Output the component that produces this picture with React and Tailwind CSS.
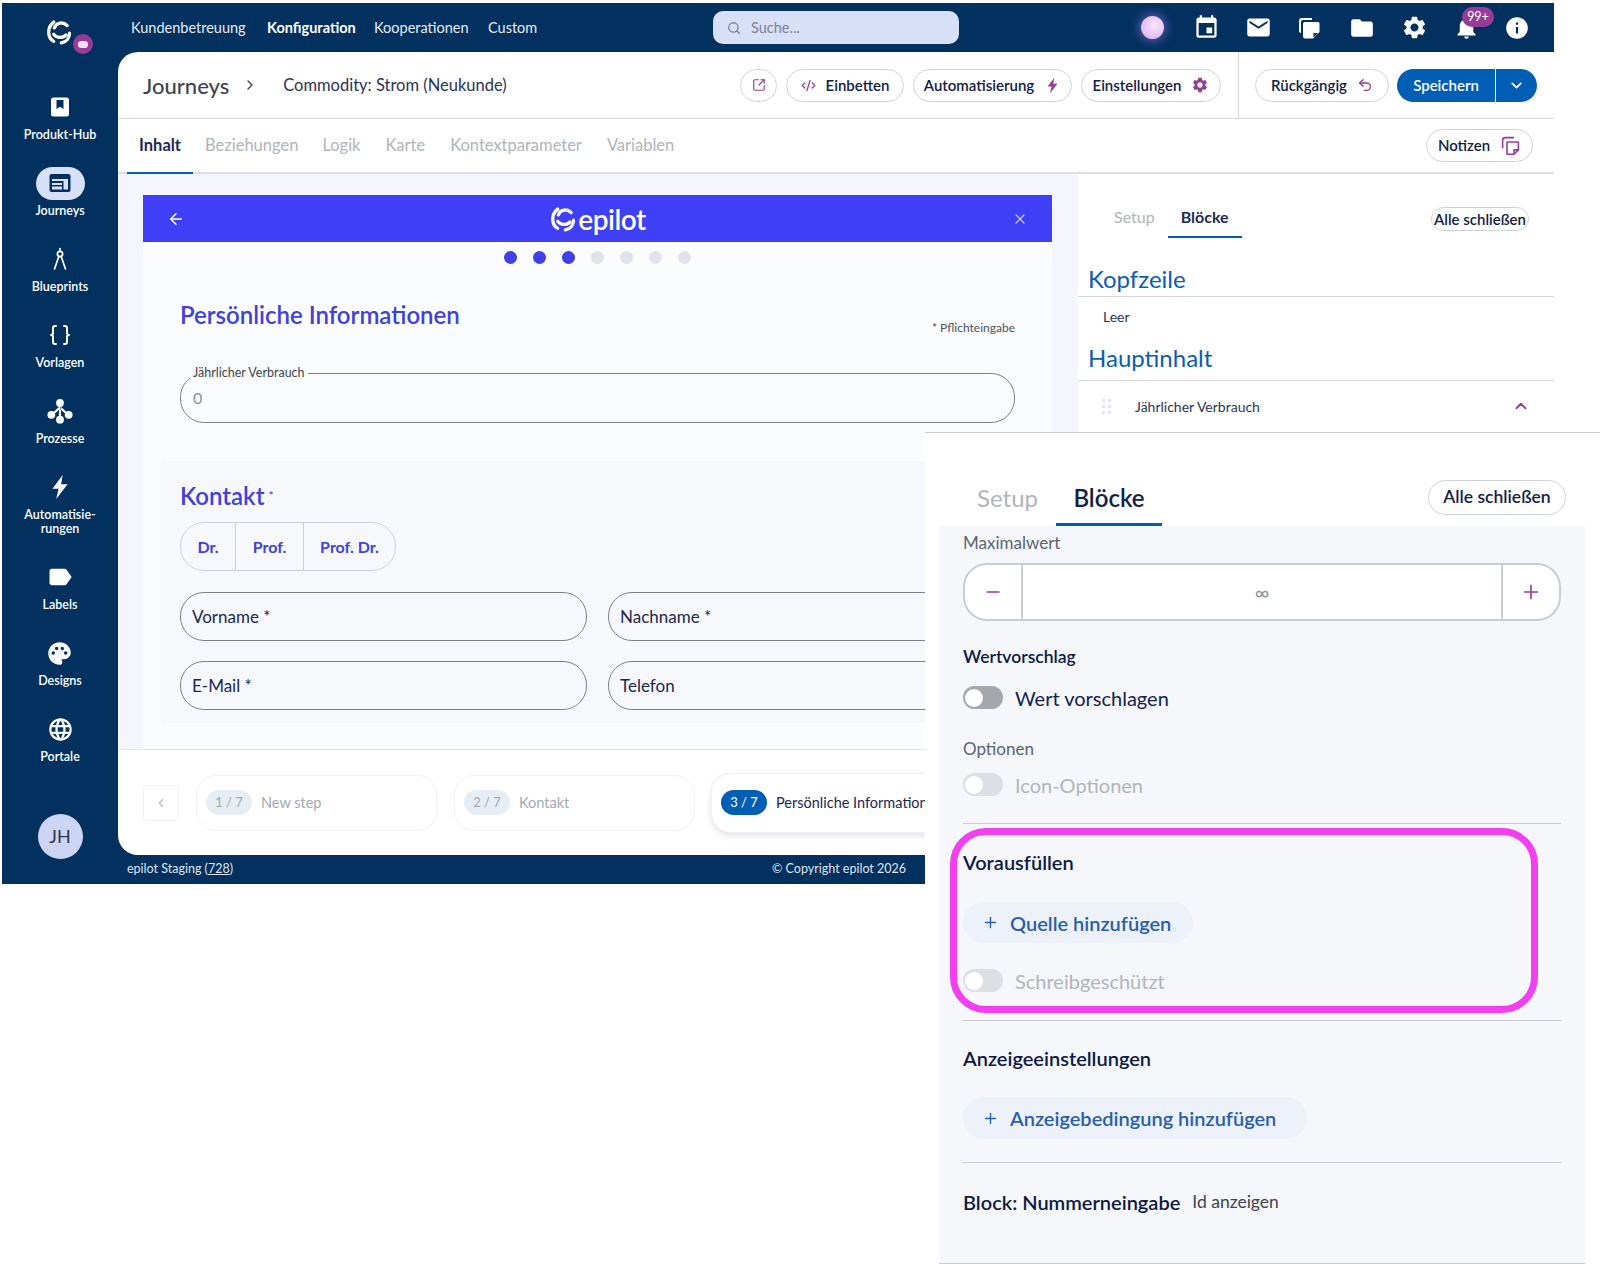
import { ArrowLeft, Braces, ChevronDown, ChevronLeft, ChevronRight, ChevronUp, Code2, Copy, Minus, Plus, Search, SquareArrowOutUpRight, Undo2, X } from 'lucide-react';
import { MdBolt, MdEmail, MdEvent, MdFolder, MdInfo, MdLabel, MdLanguage, MdNotifications, MdPalette, MdSettings } from 'react-icons/md';

// small drawings the icon packs don't have
const Swirl = ({ className }) => (
  <svg viewBox="0 0 24 24" fill="none" stroke="currentColor" strokeWidth="2.8" strokeLinecap="round" className={className}>
    <path d="M8 8.5C9.5 4 15.5 2.8 19 6.5" />
    <path d="M7.5 3.5C1.5 8 2 17 7.5 20" />
    <path d="M7.5 14C10 17.5 15.5 17.5 18 14.5" />
    <path d="M21 13C21 17 18.5 20.5 14 21.3" />
  </svg>
);

const HubIcon = () => (
  <svg viewBox="0 0 24 24" className="w-6 h-6">
    <rect x="3" y="2.5" width="18" height="19" rx="2.5" fill="white" />
    <path d="M8.5 5h7v9l-3.5-2.3L8.5 14z" fill="#03315f" />
  </svg>
);

const JourneyIcon = () => (
  <svg viewBox="0 0 24 24" className="w-[24px] h-[24px]">
    <rect x="1.5" y="3" width="21" height="18" rx="2" fill="#03315f" />
    <rect x="4" y="8" width="16" height="2" fill="#d7e0f7" />
    <rect x="4" y="12" width="10" height="2" fill="#d7e0f7" />
    <rect x="4" y="15.5" width="10" height="3" fill="#d7e0f7" />
    <rect x="15.5" y="10" width="4.5" height="8.5" fill="#d7e0f7" />
  </svg>
);

const CompassIcon = () => (
  <svg viewBox="0 0 24 24" fill="none" stroke="white" strokeWidth="1.7" strokeLinecap="round" className="w-6 h-6">
    <path d="M12 1.5v2.5" />
    <circle cx="12" cy="7" r="2.6" />
    <path d="M10.8 9.5 6.5 22M13.2 9.5 17.5 22" />
  </svg>
);

const ProcessIcon = () => (
  <svg viewBox="0 0 24 24" className="w-[26px] h-[26px]" fill="white">
    <circle cx="12" cy="4.5" r="3.6" />
    <circle cx="4" cy="15.5" r="3.6" />
    <circle cx="20" cy="15.5" r="3.6" />
    <circle cx="12" cy="20" r="3.6" />
    <path d="M11 6h2v12h-2zM11.2 8l1.4 1.4-7 6.6-1.4-1.4zM12.8 8l-1.4 1.4 7 6.6 1.4-1.4z" />
  </svg>
);

const BoltIcon = ({ className, color = 'white' }) => (
  <svg viewBox="0 0 24 24" className={className} fill={color}>
    <path d="M14.5 1 5 13.5h5.7L8.5 23 19 9.5h-6z" />
  </svg>
);

const NotesFilled = () => (
  <svg viewBox="0 0 24 24" className="w-6 h-6" fill="white">
    <path d="M5 2h10v2H6a2 2 0 0 0-2 2v11l-1.300-.5C2.500 16 2 15.500 2 15V5a3 3 0 0 1 3-3z" />
    <path d="M8 6h13a1.500 1.500 0 0 1 1.500 1.500V16l-6.500 6.500H8A2 2 0 0 1 6 20.500V8a2 2 0 0 1 2-2z" />
    <path d="M16.500 17H21l-4.500 4.500z" fill="#03315f" />
  </svg>
);

const NotesOutline = () => (
  <svg viewBox="0 0 24 24" fill="none" stroke="#963c96" strokeWidth="1.8" strokeLinejoin="round" className="w-[21px] h-[21px]">
    <path d="M16 3H6a3 3 0 0 0-3 3v9" />
    <path d="M8 8h13v9l-5 5H8z" />
    <path d="M16 22v-5h5" />
  </svg>
);

const sideItems = [
  { label: 'Produkt-Hub', icon: <HubIcon /> },
  { label: 'Journeys', icon: <div className="w-[49px] h-[33px] shrink-0 rounded-full bg-[#d7e0f7] flex items-center justify-center"><JourneyIcon /></div> },
  { label: 'Blueprints', icon: <CompassIcon /> },
  { label: 'Vorlagen', icon: <Braces size={24} color="white" strokeWidth={2} /> },
  { label: 'Prozesse', icon: <ProcessIcon /> },
  { label: 'Automatisie-', label2: 'rungen', icon: <BoltIcon className="w-[26px] h-[26px]" /> },
  { label: 'Labels', icon: <MdLabel size={28} color="white" /> },
  { label: 'Designs', icon: <MdPalette size={27} color="white" /> },
  { label: 'Portale', icon: <MdLanguage size={27} color="white" /> },
];

const Pill = ({ children, className = '' }) => (
  <button className={`h-[33px] rounded-full border border-[#cfd3da] bg-white flex items-center justify-center gap-[10px] text-[15px] font-semibold text-[#121c45] ${className}`}>
    {children}
  </button>
);

const Field = ({ children, className = '' }) => (
  <div className={`h-[49px] rounded-[24px] border border-[#7c818c] flex items-center pl-[11px] text-[17px] text-[#1d2750] ${className}`}>
    {children}
  </div>
);

const Switch = ({ disabled, label }) => (
  <div className="flex items-center gap-[12px] h-[23px]">
    <div className={`w-[40px] h-[23px] rounded-full flex items-center pl-[2px] ${disabled ? 'bg-[#dcdfe3]' : 'bg-[#a4a7ae]'}`}>
      <div className="w-[18px] h-[18px] rounded-full bg-white" />
    </div>
    <span className={`text-[20px] ${disabled ? 'text-[#b2b5ba]' : 'text-[#142050]'}`}>{label}</span>
  </div>
);

const AddButton = ({ label, className = '' }) => (
  <button className={`h-[41px] rounded-full bg-[#edf1fa] flex items-center pl-[19px] gap-[11px] text-[20px] font-semibold text-[#2a5fae] ${className}`}>
    <Plus size={17} strokeWidth={2} />
    {label}
  </button>
);

const Step = ({ n, label, active, className = '' }) => (
  <div className={`h-[56px] w-[241px] shrink-0 rounded-[20px] border border-[#eff1f4] bg-white flex items-center pl-[9px] gap-[9px] ${active ? 'shadow-[0_3px_6px_rgba(20,30,60,0.12)]' : ''} ${className}`}>
    <span className={`w-[46px] h-[25px] rounded-full flex items-center justify-center text-[13px] ${active ? 'bg-[#005eb4] text-white' : 'bg-[#e7edf5] text-[#a3a9b3]'}`}>{n}</span>
    <span className={`text-[14.500px] whitespace-nowrap ${active ? 'text-[#1d2750]' : 'text-[#a3a9b3]'}`}>{label}</span>
  </div>
);

const App = () => {
  return (
    <div className="relative w-[1600px] h-[1266px] overflow-hidden bg-white font-['Lato','Noto_Sans',sans-serif] pt-[3px] pl-[2px]">
      <div className="flex w-[1552px] h-[881px] bg-[#03315f]">
        {/* sidebar */}
        <aside className="w-[116px] shrink-0 flex flex-col items-center">
          <div className="relative h-[92px] w-full shrink-0">
            <Swirl className="absolute left-[43px] top-[15px] w-[28px] h-[28px] text-white" />
            <div className="absolute left-[71px] top-[31px] w-[20px] h-[20px] rounded-full bg-[#963c96] flex items-center justify-center">
              <div className="w-[10px] h-[7px] rounded-[3px] bg-[#f3dff3]" />
            </div>
          </div>
          {sideItems.map((item) => (
            <div key={item.label} className="flex flex-col items-center mb-[29px]">
              <div className="h-6 flex items-center justify-center">{item.icon}</div>
              <div className="mt-[9px] text-[12.500px] leading-[14px] font-semibold text-white text-center">
                {item.label}
                {item.label2 && <div>{item.label2}</div>}
              </div>
            </div>
          ))}
          <div className="mt-auto mb-[25px] w-[45px] h-[45px] rounded-full bg-[#cdd5f5] flex items-center justify-center text-[18px] text-[#2c3354]">JH</div>
        </aside>

        <div className="flex-1 min-w-0 flex flex-col">
          {/* top nav */}
          <header className="h-[49px] shrink-0 flex items-center text-[14.500px] text-[#e6ebf3]">
            <nav className="w-[595px] pl-[13px] flex items-center">
              <span className="w-[136px]">Kundenbetreuung</span>
              <span className="w-[107px] font-bold text-white">Konfiguration</span>
              <span className="w-[114px]">Kooperationen</span>
              <span>Custom</span>
            </nav>
            <div className="w-[246px] h-[33px] rounded-[10px] bg-[#d7e0f7] flex items-center pl-[14px] gap-[10px] text-[#7b8396]">
              <Search size={14} strokeWidth={2.200} />
              Suche...
            </div>
            <div className="ml-auto mr-[24px] flex items-center">
              <div className="w-[23px] h-[23px] rounded-full mr-[29px] bg-[radial-gradient(circle_at_60%_40%,#f8e6fb,#d7a6ee)] shadow-[0_0_9px_3px_rgba(130,110,220,0.55)]" />
              <MdEvent size={27} color="white" className="mr-[25px]" />
              <MdEmail size={27} color="white" className="mr-[25px]" />
              <span className="mr-[28px]"><NotesFilled /></span>
              <MdFolder size={26} color="white" className="mr-[26px]" />
              <MdSettings size={27} color="white" className="mr-[25px]" />
              <div className="relative mr-[24px]">
                <MdNotifications size={27} color="white" />
                <span className="absolute left-[9px] top-[-7px] w-[32px] h-[20px] rounded-full bg-[#963c96] text-white text-[12.500px] flex items-center justify-center">99+</span>
              </div>
              <MdInfo size={26} color="white" />
            </div>
          </header>

          {/* main panel */}
          <main className="h-[803px] shrink-0 bg-white rounded-l-[20px] flex flex-col overflow-hidden">
            <div className="h-[67px] shrink-0 border-b border-[#d3d6dc] flex items-center pl-[25px]">
              <span className="text-[22px] font-medium text-[#3d4450]">Journeys</span>
              <ChevronRight size={16} className="ml-[13px] text-[#3d4450]" />
              <span className="ml-[25px] text-[16.500px] text-[#2c3354]">Commodity: Strom (Neukunde)</span>
              <div className="ml-auto flex items-center h-full">
                <Pill className="w-[37px] mr-[9px]"><SquareArrowOutUpRight size={14} color="#963c96" strokeWidth={2} /></Pill>
                <Pill className="w-[118px] mr-[9px]"><Code2 size={15} color="#963c96" />Einbetten</Pill>
                <Pill className="w-[159px] mr-[9px]">Automatisierung<BoltIcon className="w-[17px] h-[17px]" color="#963c96" /></Pill>
                <Pill className="w-[140px] mr-[17px]">Einstellungen<MdSettings size={18} color="#963c96" /></Pill>
                <div className="h-full border-l border-[#d3d6dc] mr-[16px]" />
                <Pill className="w-[134px] mr-[8px]">Rückgängig<Undo2 size={16} color="#963c96" /></Pill>
                <div className="flex h-[33px] mr-[17px] text-white text-[15px] font-semibold">
                  <div className="w-[98px] rounded-l-full bg-[#005eb4] flex items-center justify-center">Speichern</div>
                  <div className="w-[41px] ml-px rounded-r-full bg-[#005eb4] flex items-center justify-center"><ChevronDown size={17} strokeWidth={2.500} /></div>
                </div>
              </div>
            </div>

            <div className="h-[55px] shrink-0 border-b-2 border-[#dddfe3] flex items-center pl-[9px] text-[16.500px] text-[#b1b4ba]">
              <div className="relative w-[66px] h-full flex items-center justify-center font-bold text-[#1e2a52]">
                Inhalt
                <div className="absolute left-0 right-0 bottom-[-2px] h-[2px] bg-[#005eb4]" />
              </div>
              <span className="ml-[12px]">Beziehungen</span>
              <span className="ml-[24px]">Logik</span>
              <span className="ml-[25px]">Karte</span>
              <span className="ml-[25px]">Kontextparameter</span>
              <span className="ml-[25px]">Variablen</span>
              <Pill className="ml-auto mr-[21px] w-[107px]">Notizen<NotesOutline /></Pill>
            </div>

            <div className="h-[575px] shrink-0 flex">
              {/* journey preview */}
              <section className="w-[960px] shrink-0 bg-[#f5f6fd] pt-[21px] pl-[25px] overflow-hidden">
                <div className="w-[909px] h-[47px] bg-[#3f40f5] flex items-center justify-center relative text-white">
                  <ArrowLeft size={18} strokeWidth={2} className="absolute left-[24px]" />
                  <div className="flex items-center gap-[1px]">
                    <Swirl className="w-[28px] h-[28px]" />
                    <span className="text-[28px] font-semibold leading-none tracking-[-0.5px]">epilot</span>
                  </div>
                  <X size={16} strokeWidth={1.800} className="absolute right-[24px] text-[#c9cbfb]" />
                </div>
                <div className="w-[909px] h-[507px] bg-[#fbfcfe]">
                  <div className="pt-[9px] flex justify-center gap-[16px]">
                    {[1, 1, 1, 0, 0, 0, 0].map((on, i) => (
                      <span key={i} className={`w-[13px] h-[13px] rounded-full ${on ? 'bg-[#3f40e6]' : 'bg-[#e1e3ea]'}`} />
                    ))}
                  </div>
                  <div className="mt-[36px] px-[37px]">
                    <div className="flex justify-between">
                      <h2 className="text-[24px] leading-[30px] font-semibold text-[#4041dc]">Persönliche Informationen</h2>
                      <span className="mt-[20px] text-[12px] leading-[16px] text-[#4b5160]">* Pflichteingabe</span>
                    </div>
                    <div className="relative mt-[37px] h-[50px] rounded-[24px] border border-[#7c818c] flex items-center pl-[12px] text-[16px] text-[#8a8f99]">
                      0
                      <span className="absolute left-[9px] top-[-8px] bg-[#fbfcfe] px-[3px] text-[12.500px] leading-[14px] text-[#3d4450]">Jährlicher Verbrauch</span>
                    </div>
                  </div>
                  <div className="mt-[38px] mx-[18px] pt-[20px] px-[19px] h-[262px] bg-[#f6f8fc]">
                    <div className="flex items-center">
                      <h2 className="text-[24px] leading-[30px] font-semibold text-[#4041dc]">Kontakt</h2>
                      <span className="ml-[4px] text-[12px] text-[#4041dc]">*</span>
                    </div>
                    <div className="mt-[11px] w-[216px] h-[49px] rounded-[24px] border border-[#cdd1da] flex text-[16px] font-bold text-[#4041dc]">
                      <span className="w-[55px] flex items-center justify-center border-r border-[#cdd1da]">Dr.</span>
                      <span className="w-[68px] flex items-center justify-center border-r border-[#cdd1da]">Prof.</span>
                      <span className="flex-1 flex items-center justify-center">Prof. Dr.</span>
                    </div>
                    <div className="mt-[21px] grid grid-cols-[407px_407px] gap-x-[21px] gap-y-[20px]">
                      <Field>Vorname *</Field>
                      <Field>Nachname *</Field>
                      <Field>E-Mail *</Field>
                      <Field>Telefon</Field>
                    </div>
                  </div>
                </div>
              </section>

              {/* blocks panel */}
              <section className="flex-1 min-w-0">
                <div className="h-[58px] flex items-start pl-[36px] pr-[25px] relative">
                  <span className="mt-[33px] text-[16px] leading-[20px] text-[#b1b4ba]">Setup</span>
                  <div className="relative ml-[13px] mt-[33px] w-[74px] h-[31px] text-center text-[16px] leading-[20px] font-bold text-[#1e2a52]">
                    Blöcke
                    <div className="absolute left-0 right-0 bottom-0 h-[2px] bg-[#005eb4]" />
                  </div>
                  <Pill className="ml-auto mt-[33px] w-[98px] !h-[24px] text-[12.500px]">Alle schließen</Pill>
                </div>
                <div className="h-[65px] border-b border-[#d3d6dc] pl-[10px] pt-[30px] text-[24px] leading-[34px] text-[#0a5db0]">Kopfzeile</div>
                <div className="h-[40px] pl-[25px] pt-[11px] text-[14px] leading-[18px] text-[#2c3354]">Leer</div>
                <div className="h-[44px] border-b border-[#d3d6dc] pl-[10px] pt-[4px] text-[24px] leading-[34px] text-[#0a5db0]">Hauptinhalt</div>
                <div className="h-[50px] flex items-center pl-[24px] pr-[24px] text-[14px] text-[#2c3354]">
                  <div className="grid grid-cols-2 gap-[3px] w-[9px] mr-[24px]">
                    {[0, 1, 2, 3, 4, 5].map((i) => <span key={i} className="w-[3px] h-[3px] bg-[#e3e6ee]" />)}
                  </div>
                  Jährlicher Verbrauch
                  <ChevronUp size={18} strokeWidth={2.500} color="#963c96" className="ml-auto" />
                </div>
              </section>
            </div>

            {/* step bar */}
            <div className="flex-1 border-t border-[#e3e6ec] flex items-center pl-[25px] overflow-hidden">
              <div className="w-[36px] h-[36px] shrink-0 rounded-[3px] border border-[#eff1f4] flex items-center justify-center text-[#b7bcc4]"><ChevronLeft size={14} /></div>
              <Step n="1 / 7" label="New step" className="ml-[17px]" />
              <Step n="2 / 7" label="Kontakt" className="ml-[17px]" />
              <Step n="3 / 7" label="Persönliche Informationen" active className="ml-[16px] !h-[60px]" />
            </div>
          </main>

          <footer className="flex-1 flex items-center pl-[9px] text-[12.500px] text-[#dfe5ee]">
            <span>epilot Staging (<span className="underline">728</span>)</span>
            <span className="ml-[539px]">© Copyright epilot 2026</span>
          </footer>
        </div>
      </div>

      {/* zoomed settings panel laid over the page */}
      <div className="absolute left-[925px] top-[432px] w-[675px] h-[834px] bg-white border-t border-[#c9ccd2]">
        <div className="h-[93px] flex pl-[52px]">
          <span className="mt-[50px] text-[24px] leading-[30px] text-[#b1b4ba]">Setup</span>
          <div className="relative ml-[18px] w-[106px] text-center">
            <span className="block mt-[50px] text-[24px] leading-[30px] font-semibold text-[#13204a]">Blöcke</span>
            <div className="absolute left-0 right-0 bottom-0 h-[3px] bg-[#005eb4]" />
          </div>
          <button className="ml-[266px] mt-[47px] w-[138px] h-[35px] rounded-full border border-[#cfd3da] text-[17.500px] font-semibold text-[#13204a]">Alle schließen</button>
        </div>

        <div className="ml-[14px] w-[646px] h-[738px] bg-[#f5f7fb] border-b border-[#c9ccd2] px-[24px] pt-[7px]">
          <div className="text-[17px] leading-[20px] text-[#5b6472]">Maximalwert</div>
          <div className="mt-[10px] h-[58px] rounded-[24px] border-2 border-[#c8cdd5] bg-white flex items-stretch">
            <div className="w-[56px] flex items-center justify-center"><Minus size={20} color="#963c96" strokeWidth={2} /></div>
            <div className="flex-1 border-x-2 border-[#c8cdd5] flex items-center justify-center text-[20px] text-[#8a8f99]">∞</div>
            <div className="w-[56px] flex items-center justify-center"><Plus size={22} color="#963c96" strokeWidth={1.800} /></div>
          </div>
          <div className="mt-[25px] text-[17.500px] leading-[22px] font-semibold text-[#0c1a45]">Wertvorschlag</div>
          <div className="mt-[18px]"><Switch label="Wert vorschlagen" /></div>
          <div className="mt-[30px] text-[17px] leading-[20px] text-[#5b6472]">Optionen</div>
          <div className="mt-[14px]"><Switch disabled label="Icon-Optionen" /></div>
          <div className="mt-[27px] border-t border-[#c9ccd2]" />
          <div className="mt-[27px] text-[20px] leading-[22px] font-semibold text-[#0c1a45]">Vorausfüllen</div>
          <AddButton label="Quelle hinzufügen" className="mt-[29px] w-[230px]" />
          <div className="mt-[26px]"><Switch disabled label="Schreibgeschützt" /></div>
          <div className="mt-[28px] border-t border-[#c9ccd2]" />
          <div className="mt-[25px] text-[20px] leading-[24px] font-semibold text-[#0c1a45]">Anzeigeeinstellungen</div>
          <AddButton label="Anzeigebedingung hinzufügen" className="mt-[27px] !h-[42px] w-[344px]" />
          <div className="mt-[23px] border-t border-[#c9ccd2]" />
          <div className="mt-[26px] flex items-center">
            <span className="text-[20px] leading-[24px] font-semibold text-[#0c1a45]">Block: Nummerneingabe</span>
            <span className="ml-[12px] text-[17.500px] text-[#3d4450]">Id anzeigen</span>
          </div>
        </div>

        {/* highlight frame */}
        <div className="absolute left-[25px] top-[395px] w-[588px] h-[185px] rounded-[36px] border-[7px] border-[#f23ff0] pointer-events-none" />
      </div>
    </div>
  );
};

export default App;
